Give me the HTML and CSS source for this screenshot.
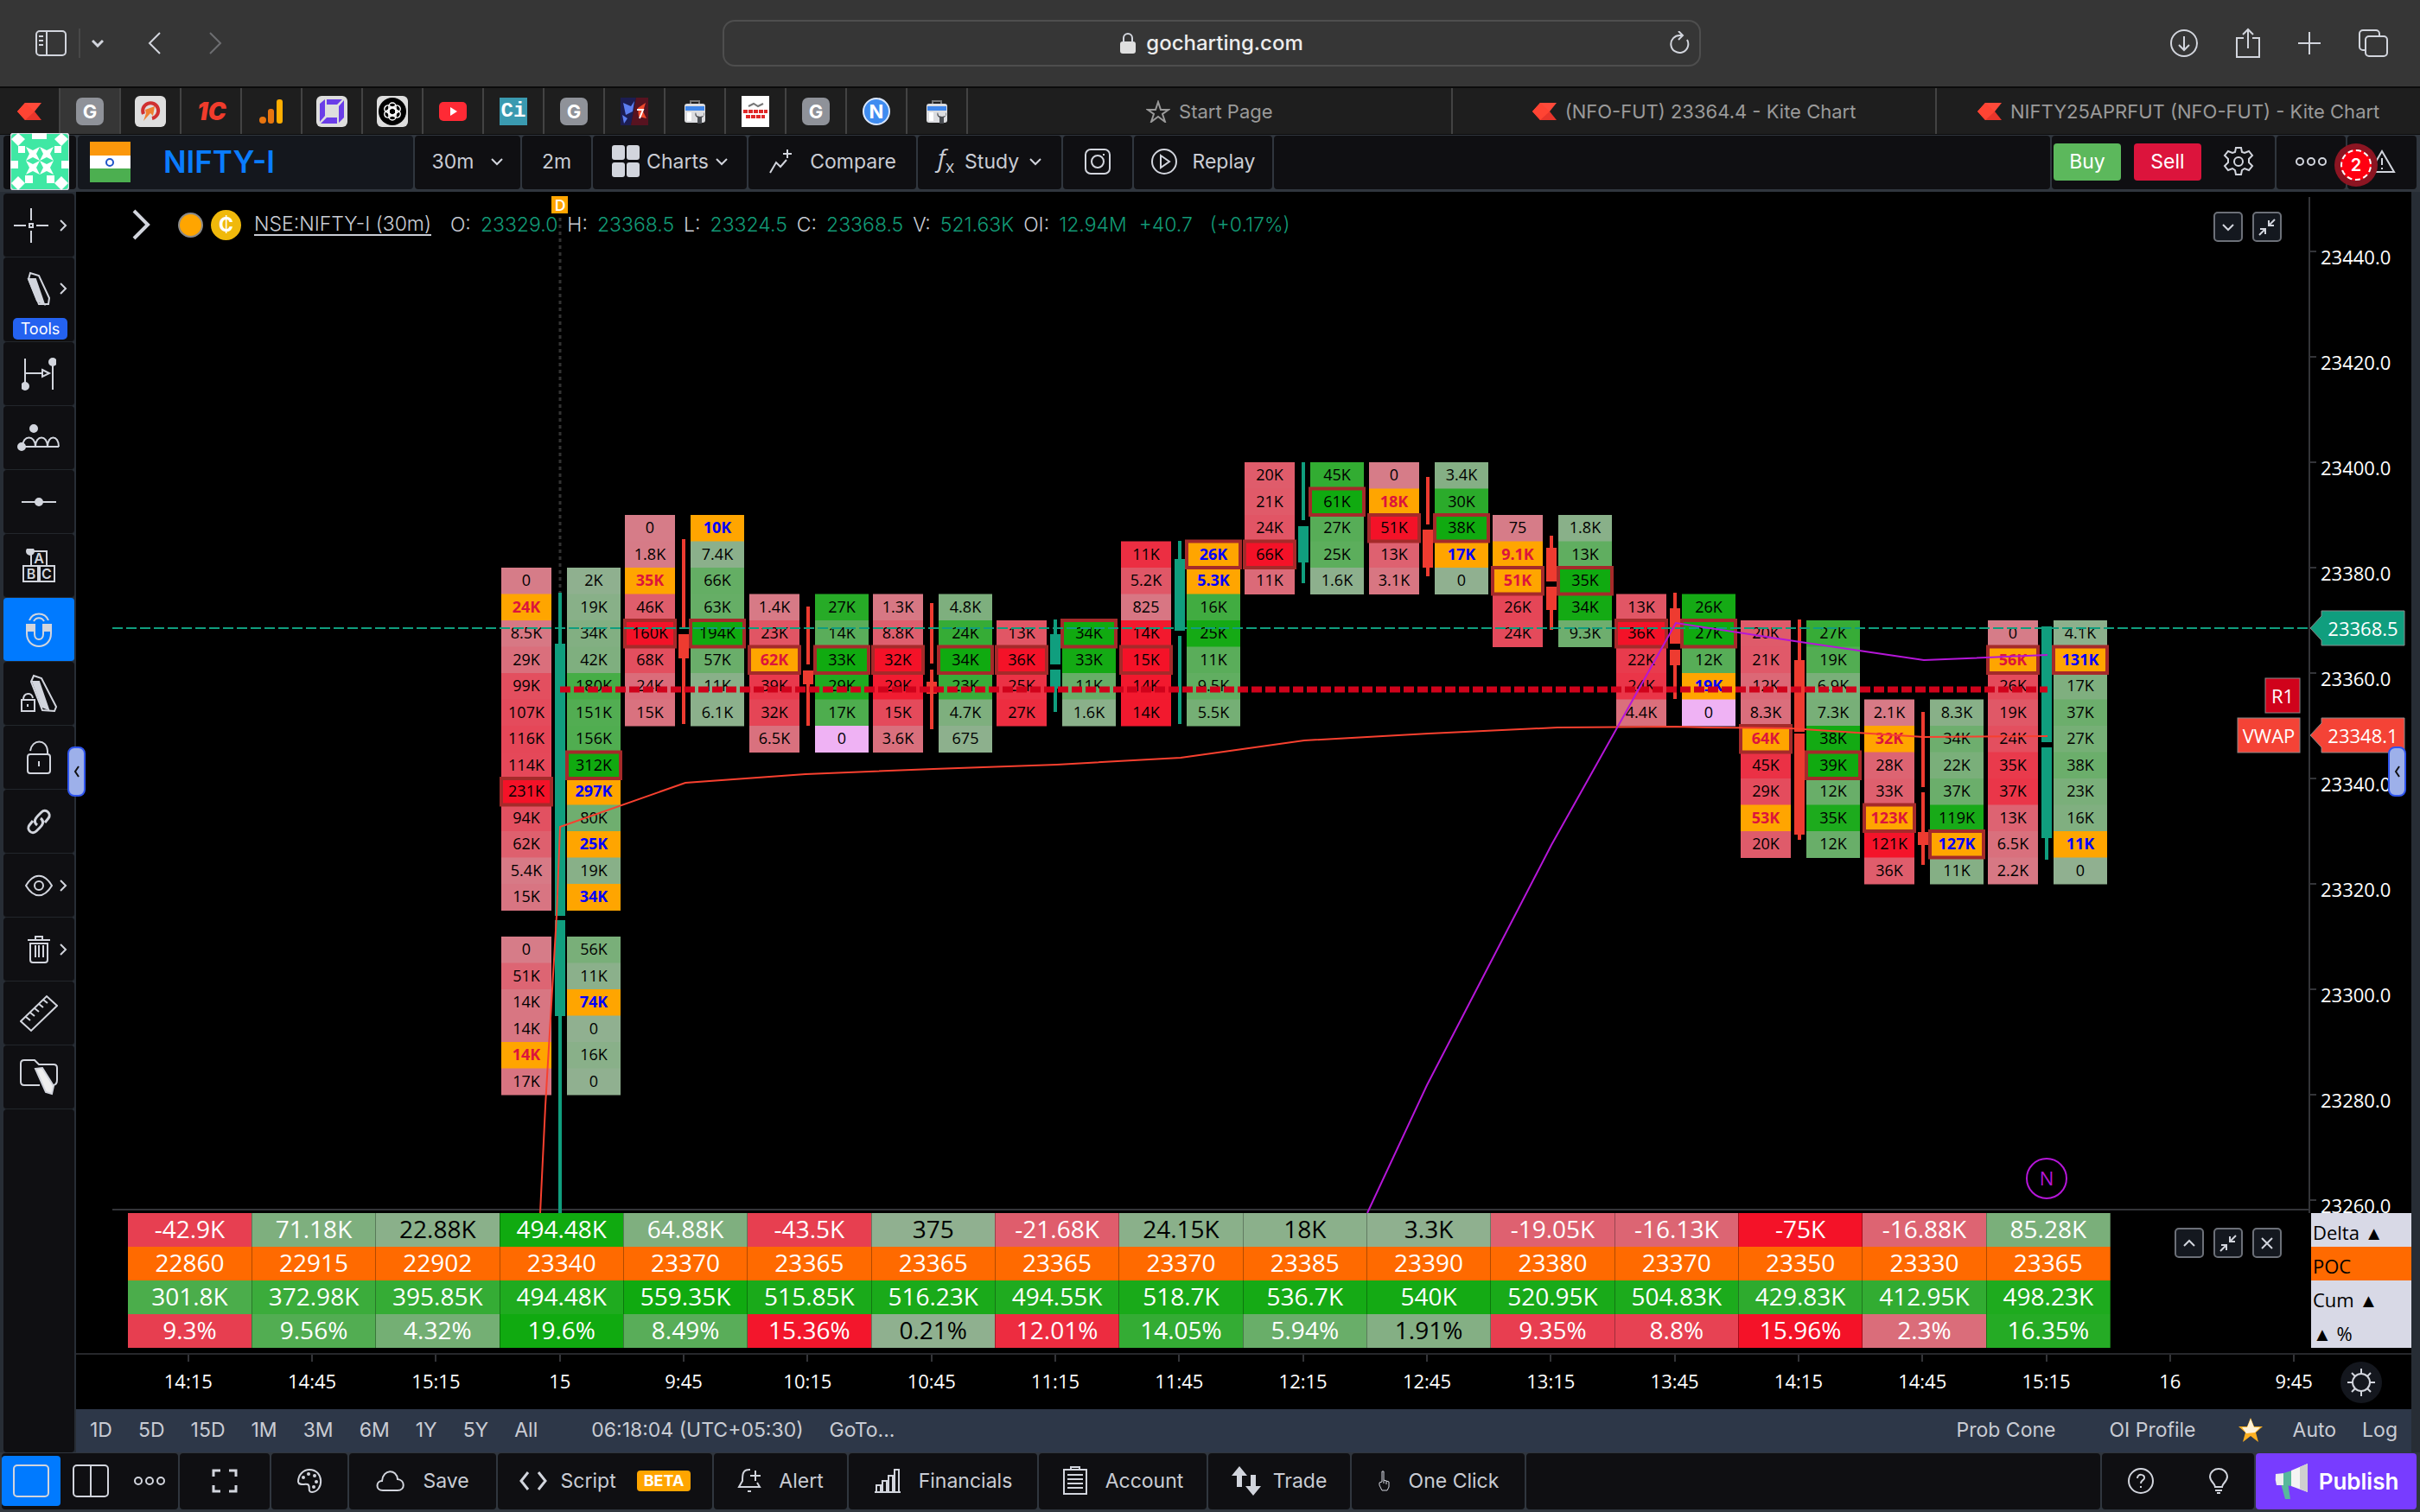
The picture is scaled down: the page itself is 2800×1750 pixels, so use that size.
FILE: index.html
```html
<!DOCTYPE html>
<html lang="en">
<head>
    <meta charset="UTF-8">
    <title>NIFTY-I - GoCharting</title>
    <link rel="stylesheet" href="styles.css">
</head>
<body>
<svg class="defs" aria-hidden="true">
    <symbol id="kite" viewBox="0 0 28 20"><path d="M9 0h19l-8 10-11 0-9 0z" fill="#ff4a3a"/><path d="M0 10h20l8 10H9z" fill="#e8352b"/><path d="M9 0 0 10l9 10 11-10z" fill="#ff4433"/></symbol>
    <symbol id="down" viewBox="0 0 14 10"><path d="M1 2l6 6 6-6"/></symbol>
    <symbol id="right" viewBox="0 0 10 14"><path d="M2 1l6 6-6 6"/></symbol>
    <symbol id="dots" viewBox="0 0 38 12"><circle cx="6" cy="6" r="4"/><circle cx="19" cy="6" r="4"/><circle cx="32" cy="6" r="4"/></symbol>
    <symbol id="shrink" viewBox="0 0 22 22"><path d="M20 2l-7 7m0-6v6h6M2 20l7-7m0 6v-6H3"/></symbol>
    <symbol id="toolbox" viewBox="0 0 28 28"><path d="M9 6V2h10v4" fill="none" stroke="#777"/><rect x="2" y="5" width="24" height="22" rx="3" fill="#dcdde0"/><rect x="3" y="8" width="22" height="5" fill="#3f86ea"/><path d="M5 15h5v10H5z" fill="#fff"/><path d="M15 15a4 4 0 0 0 2 6v7h5v-7a4 4 0 0 0 2-6v4l-4 1-4-1z" fill="#4a4d52"/></symbol>
</svg>

<header class="browser">
    <div class="browser-side">
        <button class="bare" aria-label="Sidebar"><svg width="38" height="32" viewBox="0 0 38 32"><rect x="2" y="2" width="34" height="28" rx="4"/><path d="M14 2v28M5 8h5M5 13h5M5 18h5"/></svg></button>
        <span class="browser-rule"></span>
        <button class="bare bold" aria-label="Tab groups"><svg width="14" height="10"><use href="#down"/></svg></button>
        <button class="bare back" aria-label="Back"><svg width="18" height="28" viewBox="0 0 18 28"><path d="M15 2L3 14l12 12"/></svg></button>
        <button class="bare forward" aria-label="Forward"><svg width="18" height="28" viewBox="0 0 18 28"><path d="M3 2l12 12L3 26"/></svg></button>
    </div>
    <div class="address">
        <svg class="lock" width="18" height="26" viewBox="0 0 18 26"><rect x="0" y="11" width="18" height="14" rx="3" fill="#dfdfdf" stroke="none"/><path d="M4 12V7a5 5 0 0 1 10 0v5"/></svg>
        <span>gocharting.com</span>
        <button class="bare reload" aria-label="Reload"><svg width="24" height="28" viewBox="0 0 24 28"><path d="M20 10a10 10 0 1 1-8-5h3M10 0l5 5-5 5"/></svg></button>
    </div>
    <div class="browser-side end">
        <button class="bare" aria-label="Downloads"><svg width="34" height="34" viewBox="0 0 34 34"><circle cx="17" cy="17" r="15"/><path d="M17 9v16M11 19l6 6 6-6"/></svg></button>
        <button class="bare" aria-label="Share"><svg width="30" height="36" viewBox="0 0 30 36"><path d="M10 12H2v22h26V12h-8M15 24V2M9 8l6-6 6 6"/></svg></button>
        <button class="bare" aria-label="New tab"><svg width="28" height="28" viewBox="0 0 28 28"><path d="M14 1v26M1 14h26"/></svg></button>
        <button class="bare" aria-label="Tabs"><svg width="36" height="34" viewBox="0 0 36 34"><rect x="9" y="9" width="25" height="23" rx="4"/><path d="M9 25H6a4 4 0 0 1-4-4V6a4 4 0 0 1 4-4h15a4 4 0 0 1 4 4v3"/></svg></button>
    </div>
</header>

<nav class="tabs">
    <a href="#" class="tab"><svg width="28" height="20"><use href="#kite"/></svg></a>
    <a href="#" class="tab active"><span class="fav grey">G</span></a>
    <a href="#" class="tab"><svg width="36" height="36" viewBox="0 0 36 36"><rect width="36" height="36" rx="6" fill="#dedede"/><path d="M10 21a9 9 0 1 1 10 5" fill="none" stroke="#d03030" stroke-width="4"/><path d="M12 16l11-4-2 11-3-3-8 9 3-9z" fill="#f08030"/></svg></a>
    <a href="#" class="tab"><span class="fav onec">1C</span></a>
    <a href="#" class="tab"><svg width="28" height="30" viewBox="0 0 28 30"><rect x="20" y="1" width="7" height="28" rx="3" fill="#ffae00"/><rect x="10" y="12" width="7" height="17" rx="3" fill="#e8750f"/><circle cx="4" cy="25" r="4" fill="#e8750f"/></svg></a>
    <a href="#" class="tab"><svg width="36" height="36" viewBox="0 0 36 36"><rect width="36" height="36" rx="6" fill="#dedede"/><path d="M4 9l6-5v19l-6 7zM32 5v20l-6 6V12zM12 4h18l-6 6H12zM5 32l7-7h12v7z" fill="#6a3de8"/></svg></a>
    <a href="#" class="tab"><svg width="36" height="36" viewBox="0 0 36 36"><rect width="36" height="36" rx="6" fill="#dedede"/><circle cx="18" cy="18" r="16" fill="#000"/><g fill="none" stroke="#fff" stroke-width="1.5"><rect x="14" y="8" width="8" height="15" rx="4"/><rect x="14" y="8" width="8" height="15" rx="4" transform="rotate(60 18 18)"/><rect x="14" y="8" width="8" height="15" rx="4" transform="rotate(120 18 18)"/><rect x="14" y="8" width="8" height="15" rx="4" transform="rotate(180 18 18)"/><rect x="14" y="8" width="8" height="15" rx="4" transform="rotate(240 18 18)"/><rect x="14" y="8" width="8" height="15" rx="4" transform="rotate(300 18 18)"/></g></svg></a>
    <a href="#" class="tab"><svg width="32" height="22" viewBox="0 0 32 22"><rect width="32" height="22" rx="5" fill="#ff2a35"/><path d="M13 6l8 5-8 5z" fill="#fff"/></svg></a>
    <a href="#" class="tab"><span class="fav ci">Ci</span></a>
    <a href="#" class="tab"><span class="fav grey">G</span></a>
    <a href="#" class="tab"><svg width="32" height="32" viewBox="0 0 32 32"><path d="M0 0h18l-6 32H0z" fill="#1c1d52"/><path d="M18 0h14v32H12z" fill="#571320"/><path d="M3 6l9 4 4-6-2 12-8 4zM2 20l6 4-4 6z" fill="#5c7ef0"/><path d="M20 12l9-6-3 10 4 8-9-2z" fill="#f04a2c"/><path d="M19 14h7l-4 10" fill="none" stroke="#fff" stroke-width="2"/></svg></a>
    <a href="#" class="tab"><svg width="30" height="28"><use href="#toolbox"/></svg></a>
    <a href="#" class="tab"><svg width="32" height="36" viewBox="0 0 32 36"><rect width="32" height="36" fill="#fff"/><path d="M8 12l6-3 5 3 6-3" fill="none" stroke="#777" stroke-width="2"/><path d="M2 18h28M5 24h22" stroke="#e02828" stroke-width="4" stroke-dasharray="5 1"/></svg></a>
    <a href="#" class="tab"><span class="fav grey">G</span></a>
    <a href="#" class="tab"><span class="fav en">N</span></a>
    <a href="#" class="tab"><svg width="30" height="28"><use href="#toolbox"/></svg></a>
    <a href="#" class="tab wide"><svg class="line" width="28" height="26" viewBox="0 0 28 26"><path d="M14 2l3 9h9l-7 5 3 9-8-6-8 6 3-9-7-5h9z"/></svg>Start Page</a>
    <a href="#" class="tab wide"><svg width="28" height="20"><use href="#kite"/></svg>(NFO-FUT) 23364.4 - Kite Chart</a>
    <a href="#" class="tab wide"><svg width="28" height="20"><use href="#kite"/></svg>NIFTY25APRFUT (NFO-FUT) - Kite Chart</a>
</nav>

<div class="toolbar">
    <div class="cell avatar">
        <svg width="68" height="66" viewBox="0 0 68 66"><rect width="68" height="66" rx="5" fill="#3fe8a4"/><g fill="#fff" stroke="none"><path d="M25 0h17v7H25zM0 32h9v9H0zM59 32h9v9h-9zM9 15h8v8H9zM51 15h8v8h-8zM17 49h9v9h-9zM42 49h9v9h-9zM9 0l8 7-8 8-8-8zM59 0l8 7-8 8-8-8zM9 50l8 8-8 8-8-8zM59 50l8 8-8 8-8-8z"/><path d="M18 16l8 4 8-4-4 8 4 8-8-4-8 4 4-8zM34 16l8 4 8-4-4 8 4 8-8-4-8 4 4-8zM18 32l8 4 8-4-4 8 4 8-8-4-8 4 4-8zM34 32l8 4 8-4-4 8 4 8-8-4-8 4 4-8z"/></g></svg>
    </div>
    <div class="cell symbol">
        <svg width="47" height="47" viewBox="0 0 47 47"><g stroke="none"><path d="M0 0h47v16H0z" fill="#fb970b"/><path d="M0 16h47v16H0z" fill="#fff"/><path d="M0 31h47v16H0z" fill="#4caf50"/></g><circle cx="23" cy="24" r="4" fill="none" stroke="#1f55c8" stroke-width="2"/></svg>
        <span>NIFTY-I</span>
    </div>
    <button class="cell w122">30m <svg width="14" height="10"><use href="#down"/></svg></button>
    <button class="cell w81">2m</button>
    <button class="cell w178 tight"><svg class="solid flat" width="32" height="38" viewBox="0 0 32 38"><rect width="15" height="17" rx="3"/><rect x="17" width="15" height="17" rx="3"/><rect y="20" width="15" height="17" rx="3"/><rect x="17" y="20" width="15" height="17" rx="3"/></svg>Charts <svg width="14" height="10"><use href="#down"/></svg></button>
    <button class="cell w194"><svg width="28" height="32" viewBox="0 0 28 32"><path d="M2 29l7-12 5 5 7-8M22 2v10M17 7h10"/></svg>Compare</button>
    <button class="cell w166"><span class="fx">f<sub>x</sub></span>Study <svg width="14" height="10"><use href="#down"/></svg></button>
    <button class="cell w81" aria-label="Snapshot"><svg width="32" height="32" viewBox="0 0 32 32"><rect x="2" y="2" width="28" height="28" rx="6"/><circle cx="16" cy="16" r="7"/><path d="M22 8h2"/></svg></button>
    <button class="cell w160"><svg width="32" height="32" viewBox="0 0 32 32"><circle cx="16" cy="16" r="14"/><path d="M12 9l10 7-10 7z"/></svg>Replay</button>
    <div class="cell grow"></div>
    <div class="cell trade">
        <button class="buy">Buy</button>
        <button class="sell">Sell</button>
        <button class="bare gear" aria-label="Settings"><svg width="36" height="36" viewBox="0 0 36 36"><circle cx="18" cy="18" r="5"/><path d="M15 2h6l1 5 3 1 5-2 4 5-4 4v4l4 4-4 5-5-2-3 2-1 5h-6l-1-5-3-2-5 2-4-5 4-4v-4l-4-4 4-5 5 2 3-1z"/></svg></button>
    </div>
    <button class="cell w81" aria-label="More"><svg width="38" height="12"><use href="#dots"/></svg></button>
    <button class="cell w81 warn" aria-label="Alerts"><svg width="32" height="28" viewBox="0 0 32 28"><path d="M16 2l14 24H2zM16 10v8M16 21v2"/></svg><span class="count">2</span></button>
</div>

<main class="main">
    <aside class="tools">
        <button class="tool cross" aria-label="Cursor"><svg width="40" height="40" viewBox="0 0 40 40"><path d="M20 0v14M20 26v14M0 20h14M26 20h14M18 18h4v4h-4z"/></svg><svg class="more" width="10" height="14"><use href="#right"/></svg></button>
        <button class="tool tall"><svg width="28" height="40" viewBox="0 0 28 40"><path class="solid" d="M2 9l10 25 8 4L10 9z"/><path d="M2 9l2-7 10 3 12 26-1 7H14z"/></svg><svg class="more" width="10" height="14"><use href="#right"/></svg><span class="tools-tag">Tools</span></button>
        <button class="tool" aria-label="Measure"><svg width="40" height="38" viewBox="0 0 40 38"><path d="M4 1v30M4 18h20M36 6v31M24 14l8 4-8 4z"/><circle class="solid" cx="4" cy="33" r="4"/><circle class="solid" cx="36" cy="5" r="4"/></svg></button>
        <button class="tool" aria-label="Patterns"><svg width="50" height="34" viewBox="0 0 50 34"><path d="M4 27h44M6 27c0-14 15-14 15 0 0-14 14-14 14 0 0-14 13-14 13 0"/><circle class="solid" cx="5" cy="27" r="4"/><circle class="solid" cx="19" cy="6" r="4"/></svg></button>
        <button class="tool" aria-label="Line"><svg width="40" height="12" viewBox="0 0 40 12"><path d="M0 6h40"/><circle class="solid" cx="20" cy="6" r="4"/></svg></button>
        <button class="tool" aria-label="Text"><svg width="38" height="40" viewBox="0 0 38 40"><path d="M10 3h18v17H10zM1 20h17v18H1zM20 20h17v18H20z"/><circle class="solid" cx="9" cy="3" r="4"/><g class="abc"><text x="19" y="17">A</text><text x="10" y="35">B</text><text x="28" y="35">C</text></g></svg></button>
        <button class="tool on" aria-label="Magnet"><svg width="32" height="42" viewBox="0 0 32 42"><path d="M2 15h9v11c0 8 10 8 10 0V15h9v10c0 20-28 20-28 0z"/><path class="solid" d="M2 15h9v7H2zM21 15h9v7h-9z"/><path d="M5 10c4-10 18-10 22 0M10 11c3-5 9-5 12 0"/></svg></button>
        <button class="tool" aria-label="Lock drawing"><svg width="42" height="46" viewBox="0 0 42 46"><path d="M1 30h15v13H1zM3 30c0-9 10-9 11-2M8 35v3"/><path class="solid" d="M14 9l11 29 7 3L21 9z"/><path d="M12 9l3-7 9 3 17 33-2 5-14-1z"/></svg></button>
        <button class="tool" aria-label="Lock"><svg width="30" height="40" viewBox="0 0 30 40"><rect x="2" y="16" width="26" height="22" rx="3"/><path d="M5 12C7-2 24-2 25 12v4M15 24v6"/></svg></button>
        <button class="tool" aria-label="Link"><svg width="32" height="32" viewBox="0 0 32 32"><path d="M14 20c-5-4-2-8 1-11l4-4c5-5 12 2 8 7l-4 5M18 12c5 4 2 8-1 11l-4 4c-5 5-12-2-8-7l4-5" stroke-width="3"/></svg></button>
        <button class="tool" aria-label="Show"><svg width="34" height="26" viewBox="0 0 34 26"><path d="M2 13c9-15 21-15 30 0-9 15-21 15-30 0z"/><circle cx="17" cy="13" r="5"/></svg><svg class="more" width="10" height="14"><use href="#right"/></svg></button>
        <button class="tool" aria-label="Delete"><svg width="28" height="34" viewBox="0 0 28 34"><path d="M1 6h26M10 6V2h8v4M4 10v19q0 3 3 3h14q3 0 3-3V10zM10 12v14M14 12v14M19 12v14"/></svg><svg class="more" width="10" height="14"><use href="#right"/></svg></button>
        <button class="tool" aria-label="Ruler"><svg width="44" height="44" viewBox="0 0 44 44"><path d="M1 31L31 2l12 11L13 42zM7 26l5 4M12 21l5 4M17 16l5 4M22 11l5 4M27 6l5 4"/></svg></button>
        <button class="tool" aria-label="Templates"><svg width="44" height="44" viewBox="0 0 44 44"><path d="M23 31H5q-4 0-4-4V6q0-4 4-4h12l5 5h17q4 0 4 4v14q0 5-4 6"/><path d="M18 12l8-1 13 21-2 9-7-2z" fill="#eee"/></svg></button>
        <div class="tool rest"></div>
    </aside>

    <section class="workspace">
        <div class="legend">
            <button class="bare expand" aria-label="Expand"><svg width="22" height="36" viewBox="0 0 22 36"><path d="M3 2l16 16L3 34"/></svg></button>
            <span class="dot"></span>
            <span class="coin">₵</span>
            <a href="#">NSE:NIFTY-I (30m)</a>
            <dl>
                <dt>O:</dt><dd>23329.0</dd>
                <dt>H:</dt><dd>23368.5</dd>
                <dt>L:</dt><dd>23324.5</dd>
                <dt>C:</dt><dd>23368.5</dd>
                <dt>V:</dt><dd>521.63K</dd>
                <dt>OI:</dt><dd>12.94M</dd>
            </dl>
            <span class="gain">+40.7</span>
            <span class="gain pct">(+0.17%)</span>
        </div>
        <div class="pane-buttons">
            <button aria-label="Move down"><svg width="14" height="10"><use href="#down"/></svg></button>
            <button aria-label="Shrink"><svg width="22" height="22"><use href="#shrink"/></svg></button>
        </div>
        <svg class="chart" id="chart" viewBox="0 0 2702 1182"></svg>

        <div class="delta">
            <table id="delta"></table>
            <div class="delta-buttons">
                <button aria-label="Move up"><svg class="flip" width="14" height="10"><use href="#down"/></svg></button>
                <button aria-label="Shrink"><svg width="22" height="22"><use href="#shrink"/></svg></button>
                <button aria-label="Close"><svg width="14" height="14" viewBox="0 0 14 14"><path d="M1 1l12 12M13 1L1 13"/></svg></button>
            </div>
            <ul class="delta-names">
                <li>Delta ▲</li>
                <li class="poc">POC</li>
                <li>Cum ▲</li>
                <li>▲ %</li>
            </ul>
        </div>
        <div class="times" id="times"></div>

        <div class="ranges">
            <a href="#">1D</a><a href="#">5D</a><a href="#">15D</a><a href="#">1M</a><a href="#">3M</a><a href="#">6M</a><a href="#">1Y</a><a href="#">5Y</a><a href="#">All</a>
            <time>06:18:04 (UTC+05:30)</time>
            <a href="#">GoTo...</a>
            <span class="fill"></span>
            <a href="#" class="far">Prob Cone</a>
            <a href="#">OI Profile</a>
            <svg class="star" width="30" height="30" viewBox="0 0 30 30"><path d="M15 1l4 10h10l-8 7 3 11-9-7-9 7 3-11-8-7h10z" fill="#ffb020"/><path d="M15 2l4 10h7l-6 6-10 1-5-7h6z" fill="#fff2d8"/></svg>
            <a href="#">Auto</a>
            <a href="#">Log</a>
        </div>
    </section>
    <button class="handle left" aria-label="Collapse left"><svg width="8" height="14" viewBox="0 0 8 14"><path d="M6 1L2 7l4 6"/></svg></button>
    <button class="handle side" aria-label="Open right"><svg width="8" height="14" viewBox="0 0 8 14"><path d="M6 1L2 7l4 6"/></svg></button>
</main>

<footer class="bottom">
    <div class="cell layouts">
        <button class="on" aria-label="Single"><svg width="42" height="38" viewBox="0 0 42 38"><rect x="1" y="1" width="40" height="36" rx="4"/></svg></button>
        <button aria-label="Split"><svg width="42" height="38" viewBox="0 0 42 38"><rect x="1" y="1" width="40" height="36" rx="4"/><path d="M21 1v36"/></svg></button>
        <button class="others" aria-label="More layouts"><svg width="38" height="12"><use href="#dots"/></svg></button>
    </div>
    <button class="cell w103" aria-label="Fullscreen"><svg width="30" height="28" viewBox="0 0 30 28"><path d="M2 9V2h8M20 2h8v7M28 19v7h-8M10 26H2v-7" stroke-width="3"/></svg></button>
    <button class="cell w87" aria-label="Theme"><svg width="30" height="30" viewBox="0 0 30 30"><path d="M15 2c17 0 17 25 3 26-6 0-1-7-5-9-4-1-10 2-11-3C2 8 8 2 15 2z"/><g class="solid flat"><circle cx="8" cy="11" r="2"/><circle cx="14" cy="7" r="2"/><circle cx="21" cy="9" r="2"/><circle cx="23" cy="16" r="2"/><circle cx="20" cy="22" r="2"/></g></svg></button>
    <button class="cell w170"><svg width="34" height="26" viewBox="0 0 34 26"><path d="M8 24c-9 0-8-11-1-11C8-1 24-1 25 11c9 1 9 13 0 13z"/></svg>Save</button>
    <button class="cell w249"><svg width="32" height="24" viewBox="0 0 32 24"><path d="M10 2L2 12l8 10M22 2l8 10-8 10" stroke-width="3"/></svg>Script<span class="beta">BETA</span></button>
    <button class="cell w154"><svg width="28" height="32" viewBox="0 0 28 32"><path d="M14 3C6 3 6 9 6 16l-4 7h24l-3-5M14 2v2M12 28h4M21 4v12M15 10h12"/></svg>Alert</button>
    <button class="cell w220"><svg width="32" height="30" viewBox="0 0 32 30"><path d="M1 28h30M3 28v-8h5v8M10 28V15h5v13M17 28V9h5v19M24 28V2h5v26"/></svg>Financials</button>
    <button class="cell w194"><svg width="30" height="34" viewBox="0 0 30 34"><path d="M2 4h26v28H2zM10 4V1h10v3M6 10h18M6 15h18M6 20h18M6 25h18"/></svg>Account</button>
    <button class="cell w164"><svg class="solid flat" width="34" height="34" viewBox="0 0 34 34"><path d="M9 0l9 11h-6v13H6V11H0zM25 34l-9-11h6V10h6v13h6z"/></svg>Trade</button>
    <button class="cell w200"><svg width="16" height="26" viewBox="0 0 16 26"><path d="M5 14V2h2v10l6 2v6l-2 4H5l-3-6v-3zM7 12v4M10 13v4" stroke-width="1"/></svg>One Click</button>
    <div class="cell grow"></div>
    <div class="cell help">
        <button class="bare" aria-label="Help"><svg width="32" height="32" viewBox="0 0 32 32"><circle cx="16" cy="16" r="14"/><path d="M12 13c0-6 9-5 8 0-1 3-4 2-4 6M16 22v2"/></svg></button>
        <button class="bare" aria-label="Ideas"><svg width="24" height="32" viewBox="0 0 24 32"><path d="M8 23c0-4-6-6-6-12C3-1 21-1 22 11c0 6-6 8-6 12zM8 27h8M10 30h4"/></svg></button>
    </div>
    <button class="publish"><svg width="42" height="44" viewBox="0 0 42 44"><path d="M8 24l8-1 3 19h-6z" fill="#57b89c"/><path d="M2 13l10-1v14H3q-2-6-1-13z" fill="#eee"/><path d="M11 12l10-3v18l-10-1z" fill="#57b89c"/><path d="M20 9L39 1v33L20 27z" fill="#f4f4f4"/><path d="M30 5l9-4v33l-9-4z" fill="#cfcfcf"/></svg>Publish</button>
</footer>

<script src="chart.js"></script>
</body>
</html>
```
FILE: chart.js
```js
var NS = 'http://www.w3.org/2000/svg';
var chart = document.getElementById('chart');

var STEP = 143.35;      // distance between two bars
var FIRST = 130;        // x of the first bar
var ROW = 30.5;         // height of five points
var GREEN = '#109e7e';
var RED = '#ee3b30';

var times = ['14:15', '14:45', '15:15', '15', '9:45', '10:15', '10:45', '11:15', '11:45',
    '12:15', '12:45', '13:15', '13:45', '14:15', '14:45', '15:15', '16', '9:45'];

// cell flags: * imbalance, ! point of control, ^ unfinished auction, _ empty row
// candle parts: [top, bottom, 1 if it is the body]
var bars = [
    {i: 3, top: 23380, up: 1,
        bid: '0 *24K 8.5K 29K 99K 107K 116K 114K !231K 94K 62K 5.4K 15K _ 0 51K 14K 14K *14K 17K',
        ask: '2K 19K 34K 42K 180K 151K 156K !312K *297K 80K *25K 19K *34K _ 56K 11K *74K 0 16K 0',
        candle: [[464, 523], [523, 838, 1], [843, 954, 1], [954, 1182]]},
    {i: 4, top: 23390,
        bid: '0 1.8K *35K 46K !160K 68K 24K 15K',
        ask: '*10K 7.4K 66K 63K !194K 57K 11K 6.1K',
        candle: [[402, 505], [512, 540, 1], [540, 616]]},
    {i: 5, top: 23375,
        bid: '1.4K 23K *!62K 39K 32K 6.5K',
        ask: '27K 14K !33K 29K 17K ^0',
        candle: [[480, 547], [554, 570, 1], [570, 618]]},
    {i: 6, top: 23375,
        bid: '1.3K 8.8K !32K 29K 15K 3.6K',
        ask: '4.8K 24K !34K 23K 4.7K 675',
        candle: [[476, 546], [553, 567], [567, 581, 1], [581, 622]]},
    {i: 7, top: 23370, up: 1,
        bid: '13K !36K 25K 27K',
        ask: '!34K 33K 11K 1.6K',
        candle: [[495, 512], [512, 547, 1], [553, 575, 1], [575, 602]]},
    {i: 8, top: 23385, up: 1,
        bid: '11K 5.2K 825 14K !15K 14K 14K',
        ask: '*!26K *5.3K 16K 25K 11K 9.5K 5.5K',
        candle: [[404, 425], [425, 508, 1], [514, 616]]},
    {i: 9, top: 23400, up: 1,
        bid: '20K 21K 24K !66K 11K',
        ask: '45K !61K 27K 25K 1.6K',
        candle: [[313, 380], [387, 429, 1], [429, 453]]},
    {i: 10, top: 23400,
        bid: '0 *18K !51K 13K 3.1K',
        ask: '3.4K 30K !38K *17K 0',
        candle: [[330, 385], [391, 435, 1], [435, 445]]},
    {i: 11, top: 23390,
        bid: '75 *9.1K *!51K 26K 24K',
        ask: '1.8K 13K !35K 34K 9.3K',
        candle: [[398, 412], [412, 451, 1], [457, 484, 1], [484, 507]]},
    {i: 12, top: 23375,
        bid: '13K !36K 22K 24K 4.4K',
        ask: '26K !27K 12K *19K ^0',
        candle: [[464, 482], [482, 523, 1], [530, 548, 1], [548, 587]]},
    {i: 13, top: 23370,
        bid: '20K 21K 12K 8.3K *!64K 45K 29K *53K 20K',
        ask: '27K 19K 6.9K 7.3K 38K !39K 12K 35K 12K',
        candle: [[495, 542], [542, 625, 1], [627, 744, 1], [744, 750]]},
    {i: 14, top: 23355,
        bid: '2.1K *32K 28K 33K *!123K 121K 36K',
        ask: '8.3K 34K 22K 37K 119K *!127K 11K',
        candle: [[602, 689], [695, 741], [741, 756, 1], [756, 779]]},
    {i: 15, top: 23370, up: 1,
        bid: '0 *!56K 26K 19K 24K 35K 37K 13K 6.5K 2.2K',
        ask: '4.1K *!131K 17K 37K 27K 38K 23K 16K *11K 0',
        candle: [[503, 637, 1], [643, 748, 1], [748, 773]]}
];

var delta = ['-42.9K', '71.18K', '22.88K', '494.48K', '64.88K', '-43.5K', '375', '-21.68K', '24.15K',
    '18K', '3.3K', '-19.05K', '-16.13K', '-75K', '-16.88K', '85.28K'];
var poc = [22860, 22915, 22902, 23340, 23370, 23365, 23365, 23365, 23370,
    23385, 23390, 23380, 23370, 23350, 23330, 23365];
var cum = ['301.8K', '372.98K', '395.85K', '494.48K', '559.35K', '515.85K', '516.23K', '494.55K', '518.7K',
    '536.7K', '540K', '520.95K', '504.83K', '429.83K', '412.95K', '498.23K'];
var share = ['9.3%', '9.56%', '4.32%', '19.6%', '8.49%', '15.36%', '0.21%', '12.01%', '14.05%',
    '5.94%', '1.91%', '9.35%', '8.8%', '15.96%', '2.3%', '16.35%'];

function xOf(i) {
    return Math.round(FIRST + STEP * i);
}

function yOf(price) {
    return 69 + (23440 - price) * ROW / 5;
}

function add(name, attrs, text) {
    var node = document.createElementNS(NS, name);
    for (var key in attrs) {
        node.setAttribute(key, attrs[key]);
    }
    if (text !== undefined) {
        node.textContent = text;
    }
    chart.appendChild(node);
    return node;
}

function toNumber(text) {
    var n = Math.abs(parseFloat(text));
    return /K/.test(text) ? n * 1000 : n;
}

function mix(from, to, t) {
    return 'rgb(' + from.map(function (c, k) {
        return Math.round(c + (to[k] - c) * t);
    }).join(',') + ')';
}

function shade(isAsk, t) {
    return isAsk ? mix([144, 176, 144], [16, 170, 16], t) : mix([214, 124, 136], [244, 18, 40], t);
}

function drawSide(bar, cells, isAsk) {
    var x = xOf(bar.i) + (isAsk ? 8 : -68);
    var w = isAsk ? 62 : 58;
    var values = cells.split(' ');
    var max = Math.max.apply(null, values.map(function (v) {
        return toNumber(v.replace(/[*!^_]/g, '') || '0');
    }));
    var boxes = [];

    values.forEach(function (v, row) {
        if (v === '_') {
            return;
        }
        var label = v.replace(/[*!^]/g, '');
        var y = yOf(bar.top) + row * ROW;
        var hot = v.indexOf('*') >= 0;
        var fill = shade(isAsk, toNumber(label) / max);
        if (hot) fill = '#ffa500';
        if (v.indexOf('^') >= 0) fill = '#efb2f4';
        add('rect', {x: x, y: y, width: w, height: ROW + 0.5, fill: fill});
        if (v.indexOf('!') >= 0) boxes.push(y);
        add('text', {x: x + w / 2, y: y + 21, 'class': 'num' + (hot ? (isAsk ? ' hot-ask' : ' hot-bid') : '')}, label);
    });

    boxes.forEach(function (y) {
        add('rect', {x: x, y: y, width: w, height: ROW, 'class': 'box'});
    });
}

// grid and price axis
add('path', {d: 'M42 1178H2584M2584 6V1182', 'class': 'axis'});
add('path', {d: 'M560 30V464', 'class': 'day'});
for (var p = 23440; p >= 23260; p -= 20) {
    add('path', {d: 'M2584 ' + yOf(p) + 'h8', 'class': 'axis'});
    add('text', {x: 2597, y: yOf(p) + 15, 'class': 'price'}, p + '.0');
}

bars.forEach(function (bar) {
    drawSide(bar, bar.bid, false);
    drawSide(bar, bar.ask, true);
    bar.candle.forEach(function (c) {
        var w = c[2] ? 12 : 4;
        add('rect', {x: xOf(bar.i) - w / 2, y: c[0], width: w, height: c[1] - c[0], fill: bar.up ? GREEN : RED});
    });
});

// last price, pivot, VWAP and the slow average
add('path', {d: 'M42 505H2584', 'class': 'last'});
add('path', {d: 'M560 576H2281', 'class': 'pivot'});
add('path', {d: 'M537 1182L543 1058L556 838L560 735L705 684L844 674L992 668L1135 663L1278 655L1421 635L1565 627L1714 620L1851 619L1887 620L1983 621L2138 631L2281 630', 'class': 'vwap'});
add('path', {d: 'M1494 1182L1563 1034L1707 756L1851 499L1995 521L2138 542L2281 536', 'class': 'slow'});

add('circle', {cx: 2280, cy: 1142, r: 23, 'class': 'news'});
add('text', {x: 2280, y: 1150, 'class': 'news-text'}, 'N');
add('rect', {x: 550, y: 5, width: 19, height: 20, fill: '#ffa500'});
add('text', {x: 560, y: 22, 'class': 'day-text'}, 'D');

// tags
add('rect', {x: 2533, y: 563, width: 40, height: 40, fill: '#d0021b', 'class': 'tag'});
add('text', {x: 2553, y: 592, 'class': 'tag-text'}, 'R1');
add('rect', {x: 2501, y: 609, width: 72, height: 40, fill: '#f44336', 'class': 'tag'});
add('text', {x: 2537, y: 638, 'class': 'tag-text'}, 'VWAP');
add('path', {d: 'M2585 505l13-14v-6h96v40h-96v-6z', fill: GREEN, 'class': 'tag'});
add('text', {x: 2646, y: 514, 'class': 'tag-text'}, '23368.5');
add('path', {d: 'M2585 629l13-14v-6h96v40h-96v-6z', fill: '#f44336', 'class': 'tag'});
add('text', {x: 2646, y: 638, 'class': 'tag-text'}, '23348.1');

// delta table
function tableRow(values, paint) {
    return '<tr>' + values.map(function (v, k) {
        var c = paint ? paint(v, k) : null;
        var style = c ? ' style="background:' + c.bg + (c.dark ? ';color:#000' : '') + '"' : '';
        return '<td' + style + '>' + v + '</td>';
    }).join('') + '</tr>';
}

function painter(maxUp, maxDown, signs) {
    return function (v, k) {
        var down = signs && signs[k].charAt(0) === '-';
        var t = toNumber(v) / (down ? maxDown : maxUp);
        return {bg: shade(!down, t), dark: !down && t < 0.1};
    };
}

document.getElementById('delta').innerHTML =
    tableRow(delta, painter(494480, 75000, delta)) +
    tableRow(poc) +
    tableRow(cum, painter(559350, 1)) +
    tableRow(share, painter(19.6, 15.96, delta));

document.getElementById('times').innerHTML = times.map(function (t) {
    return '<span>' + t + '</span>';
}).join('') + '<button aria-label="Axis settings"><svg width="34" height="34" viewBox="0 0 34 34">' +
    '<circle cx="17" cy="17" r="10"/><path d="M17 1v6M17 27v6M1 17h6M27 17h6M6 6l4 4M24 24l4 4M28 6l-4 4M10 24l-4 4"/></svg></button>';
```
FILE: styles.css
```css
* {
    box-sizing: border-box;
}

body {
    margin: 0;
    min-height: 100vh;
    display: flex;
    flex-direction: column;
    background: #000;
    color: #c9ccd4;
    font: 23px/28px Inter, sans-serif;
}

a {
    color: inherit;
    text-decoration: none;
}

ul, dl, dd {
    list-style: none;
    margin: 0;
    padding: 0;
}

button {
    border: 0;
    padding: 0;
    color: inherit;
    font: inherit;
    background: none;
}

svg {
    display: block;
    flex: none;
    fill: none;
    stroke: #d2d5dd;
    stroke-width: 2;
}

.solid {
    fill: #d2d5dd;
}

.flat, .star {
    stroke: none;
}

.defs {
    position: absolute;
    width: 0;
    height: 0;
}

.tab svg {
    stroke: none;
}

.tab svg.line {
    stroke: #9a9a9a;
}

/* browser */
.browser {
    display: flex;
    align-items: center;
    justify-content: space-between;
    height: 102px;
    padding: 0 36px 0 40px;
    background: #363636;
    border-bottom: 2px solid #0c0c0c;
}

.browser-side {
    display: flex;
    align-items: center;
    width: 400px;
}

.browser-side.end {
    justify-content: flex-end;
    gap: 42px;
}

.browser-rule {
    width: 2px;
    height: 34px;
    margin: 0 13px;
    background: #484848;
}

.bold svg {
    stroke-width: 3;
}

.back {
    margin-left: 50px;
}

.forward {
    margin-left: 52px;
    opacity: 0.35;
}

.address {
    position: relative;
    display: flex;
    align-items: center;
    justify-content: center;
    gap: 12px;
    width: 1132px;
    height: 54px;
    border: 2px solid #4e4e4e;
    border-radius: 14px;
    color: #ececec;
    font-size: 24px;
    font-weight: 500;
}

.reload {
    position: absolute;
    right: 10px;
}

.tabs {
    display: flex;
    height: 54px;
    background: #1e1e1e;
    color: #9a9a9a;
    border-bottom: 1px solid #0c0c0c;
    font-size: 22px;
}

.tab {
    display: flex;
    align-items: center;
    justify-content: center;
    gap: 10px;
    width: 70px;
    border-right: 2px solid #434343;
}

.tab.active {
    background: #363636;
}

.tab.wide {
    flex: 1;
}

.tab:last-child {
    border: 0;
}

.fav {
    width: 32px;
    height: 32px;
    border-radius: 7px;
    color: #fff;
    font-weight: 700;
    line-height: 32px;
    text-align: center;
}

.fav.grey {
    background: #8f9299;
}

.fav.onec {
    color: #f03c2c;
    font-size: 28px;
    font-style: italic;
    font-weight: 900;
}

.fav.ci {
    border-radius: 0;
    background: #3a9ab0;
    font-family: "Liberation Mono", monospace;
    font-size: 24px;
}

.fav.en {
    border: 2px solid #dbe8ff;
    border-radius: 50%;
    background: #3f8cf0;
    line-height: 28px;
}

/* top toolbar */
.toolbar, .bottom {
    display: flex;
    gap: 2px;
    background: #30363e;
}

.toolbar {
    height: 66px;
    padding: 1px 4px 3px;
}

.cell {
    display: flex;
    align-items: center;
    justify-content: center;
    gap: 20px;
    background: #0f0f12;
    border-radius: 4px;
}

.toolbar .cell, .bottom .cell {
    padding-bottom: 2px;
}

.grow {
    flex: 1;
}

.w81 { width: 80px; }
.w87 { width: 88px; }
.w103 { width: 104px; }
.w122 { width: 122px; }
.w154 { width: 154px; }
.w160 { width: 160px; gap: 16px; }
.w164 { width: 164px; gap: 14px; }
.w166 { width: 166px; gap: 12px; }
.w170 { width: 170px; }
.w178 { width: 178px; }
.w194 { width: 194px; }
.w200 { width: 200px; }
.w220 { width: 218px; }
.w249 { width: 248px; gap: 16px; }

.tight {
    gap: 8px;
}

.avatar {
    width: 84px;
}

.symbol {
    justify-content: flex-start;
    gap: 38px;
    width: 388px;
    padding-left: 14px;
    background: #14171d;
    color: #0a7dff;
    font-size: 35px;
    font-weight: 600;
}

.fx {
    font: italic 28px/28px "Open Sans", sans-serif;
}

.fx sub {
    font-size: 20px;
    font-style: normal;
}

.trade {
    justify-content: flex-start;
    gap: 15px;
    width: 258px;
    padding-left: 2px;
}

.gear {
    margin-left: 10px;
}

.buy, .sell {
    width: 78px;
    height: 43px;
    border-radius: 4px;
    background: #5cb85c;
    color: #fff;
}

.sell {
    background: #dc143c;
}

.warn {
    position: relative;
    justify-content: flex-end;
    padding-right: 24px;
}

.count {
    position: absolute;
    left: -8px;
    top: 16px;
    width: 36px;
    height: 36px;
    border: 2px dashed #fff;
    border-radius: 50%;
    background: #f01;
    color: #fff;
    font-size: 20px;
    font-weight: 600;
    line-height: 32px;
    box-shadow: 0 0 0 7px #8c1522;
}

/* workspace */
.main {
    position: relative;
    flex: 1;
    display: flex;
    padding: 0 10px 0 4px;
    background: #272d35;
}

.tools {
    display: flex;
    flex-direction: column;
    width: 84px;
    padding: 2px 2px 0 0;
}

.tool {
    position: relative;
    display: flex;
    align-items: center;
    justify-content: center;
    height: 74px;
    border-bottom: 1px solid #22262b;
    border-radius: 4px;
    background: #0f0f12;
}

.tool.cross {
    padding-right: 18px;
}

.tool.tall {
    height: 98px;
    padding-bottom: 26px;
}

.tool.on {
    background: #007aff;
}

.tool.rest {
    flex: 1;
    border: 0;
}

.more {
    position: absolute;
    right: 8px;
}

.tools-tag {
    position: absolute;
    bottom: 2px;
    left: 11px;
    right: 8px;
    border-radius: 5px;
    background: #2462f0;
    color: #fff;
    font-size: 18px;
    line-height: 25px;
}

.abc {
    fill: #d2d5dd;
    stroke: none;
    font-size: 16px;
    font-weight: 600;
    text-anchor: middle;
}

.workspace {
    position: relative;
    flex: 1;
    display: flex;
    flex-direction: column;
    background: #000;
}

.chart {
    width: 100%;
    flex: 1;
    stroke: none;
    font-family: "Open Sans", sans-serif;
}

.legend {
    position: absolute;
    top: 20px;
    left: 64px;
    display: flex;
    align-items: center;
    font-weight: 300;
}

.legend a {
    margin: 0 22px 0 15px;
    border-bottom: 2px solid #c9ccd4;
    line-height: 24px;
}

.legend dl {
    display: flex;
    gap: 11px;
}

.legend dd, .gain {
    color: #129a76;
}

.gain {
    margin-left: 14px;
}

.gain.pct {
    margin-left: 20px;
}

.expand svg {
    stroke-width: 4;
}

.dot {
    width: 29px;
    height: 29px;
    margin: 0 9px 0 32px;
    border: 2px solid #8a8a8a;
    border-radius: 50%;
    background: #ffa500;
}

.coin {
    width: 35px;
    border-radius: 50%;
    background: #f0b90b;
    color: #fff;
    font-weight: 700;
    line-height: 35px;
    text-align: center;
}

.pane-buttons, .delta-buttons {
    position: absolute;
    top: 23px;
    right: 150px;
    display: flex;
    gap: 11px;
}

.pane-buttons button, .delta-buttons button {
    display: flex;
    align-items: center;
    justify-content: center;
    width: 34px;
    height: 35px;
    border: 2px solid #6c7078;
    border-radius: 5px;
    background: #14181f;
}

.flip {
    transform: rotate(180deg);
}

.axis {
    fill: none;
    stroke: #333438;
    stroke-width: 2;
}

.day {
    stroke: #333;
    stroke-width: 3;
    stroke-dasharray: 4 4;
}

.num, .news-text, .day-text, .tag-text {
    font-size: 18px;
    text-anchor: middle;
    fill: #000;
}

.hot-bid, .hot-ask {
    font-weight: 700;
    fill: #dc143c;
}

.hot-ask {
    fill: #00f;
}

.box {
    fill: none;
    stroke: #a52a2a;
    stroke-width: 4;
}

.price {
    font-size: 22px;
    fill: #fff;
}

.last, .pivot, .vwap, .slow, .news {
    fill: none;
    stroke: #109e7e;
    stroke-width: 2;
    stroke-dasharray: 12 4;
}

.pivot {
    stroke: #d0021b;
    stroke-width: 7;
}

.vwap, .slow, .news {
    stroke: #f8402f;
    stroke-dasharray: none;
}

.slow, .news {
    stroke: #b516d8;
}

.news-text {
    font-size: 22px;
    fill: #b516d8;
}

.day-text {
    fill: #fff;
    font-weight: 600;
}

.tag {
    stroke: #8a8a8a;
    stroke-width: 1;
}

.tag-text {
    font-size: 22px;
    fill: #fff;
}

.delta {
    position: relative;
    display: grid;
    grid-template-columns: 60fr 2294fr 232fr 116fr;
    padding-bottom: 6px;
    border-bottom: 2px solid #26272b;
    font-family: "Open Sans", sans-serif;
}

.delta table {
    grid-column: 2;
    width: 100%;
    table-layout: fixed;
    border-collapse: collapse;
    color: #fff;
    font-size: 28px;
    text-align: center;
}

.delta td {
    height: 39px;
    padding: 0;
    border-right: 1px solid rgba(0, 0, 0, 0.3);
    background: #ff6a00;
    line-height: 36px;
    vertical-align: top;
}

.delta-buttons {
    top: 17px;
}

.delta-names {
    grid-column: 4;
    color: #000;
    font-size: 22px;
}

.delta-names li {
    height: 39px;
    padding-left: 2px;
    background: #d8d9e6;
    line-height: 44px;
}

.delta-names .poc {
    background: #ff6a00;
}

.times {
    display: grid;
    grid-template-columns: 58fr repeat(18, 143fr) 64fr;
    height: 63px;
    color: #fff;
    font: 22px/28px "Open Sans", sans-serif;
    text-align: center;
}

.times span::before {
    content: "";
    display: block;
    width: 2px;
    height: 8px;
    margin: 0 auto 8px;
    background: #333438;
}

.times span:first-child {
    grid-column: 2;
}

.times button {
    position: absolute;
    right: 34px;
    width: 48px;
    height: 48px;
    margin-top: 8px;
    padding: 7px;
    border-radius: 50%;
    background: #14171e;
}

.ranges {
    display: flex;
    align-items: center;
    gap: 30px;
    height: 50px;
    padding: 0 16px 2px;
    background: #2d3748;
}

.ranges time {
    margin-left: 32px;
}

.ranges .fill {
    flex: 1;
}

.far {
    margin-right: 32px;
}

.star {
    margin: 0 4px 0 18px;
}

.handle {
    position: absolute;
    top: 642px;
    left: 78px;
    display: flex;
    align-items: center;
    justify-content: center;
    width: 21px;
    height: 58px;
    border: 2px solid #2f55ee;
    border-radius: 8px;
    background: #9db0ea;
}

.handle svg {
    stroke: #111;
}

.handle.side {
    left: auto;
    right: 16px;
}

/* bottom bar */
.bottom {
    height: 69px;
    padding: 1px 4px 3px 2px;
}

.layouts {
    justify-content: flex-start;
    gap: 14px;
    width: 204px;
}

.layouts .on {
    height: 58px;
    padding: 0 13px;
    border-radius: 4px;
    background: #007aff;
}

.others {
    margin-left: 14px;
}

.beta {
    padding: 0 8px;
    border-radius: 4px;
    background: #ffa500;
    color: #fff;
    font-size: 18px;
    font-weight: 700;
    line-height: 24px;
    margin-left: 8px;
}

.help {
    gap: 62px;
    width: 176px;
}

.publish {
    display: flex;
    align-items: center;
    justify-content: center;
    gap: 10px;
    width: 186px;
    border-radius: 4px;
    background: #783cff;
    color: #fff;
    font-size: 26px;
    font-weight: 600;
}

.publish svg {
    stroke: none;
}
```
